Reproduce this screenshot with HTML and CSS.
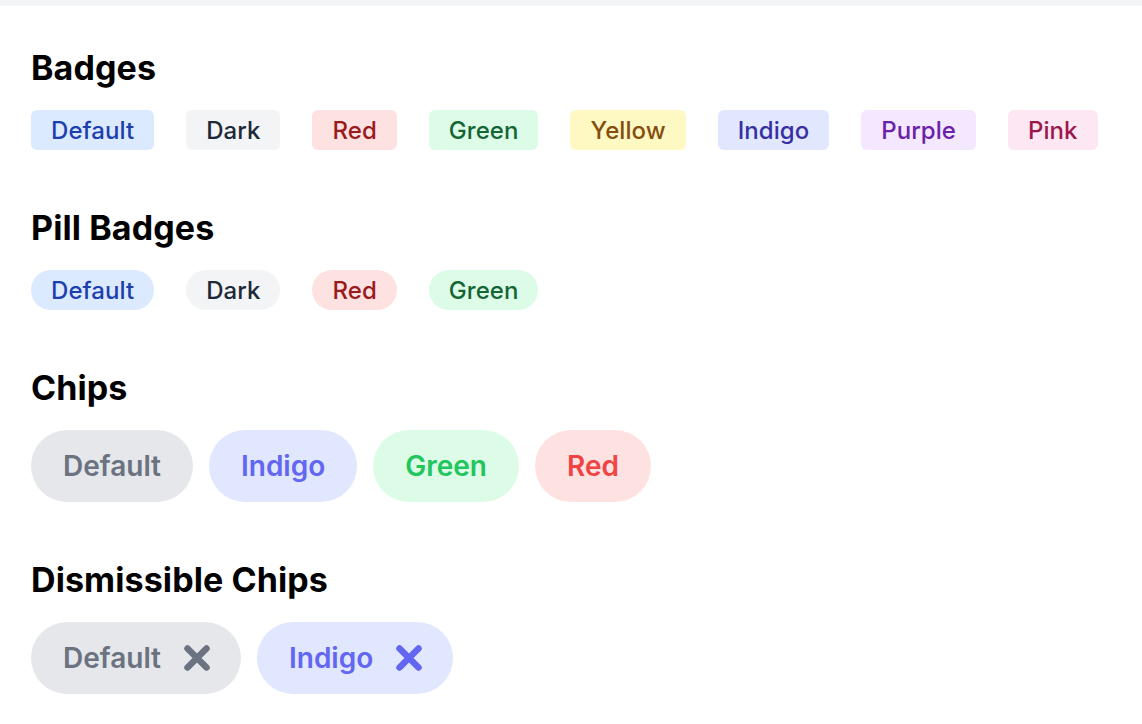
FILE: index.html
```html
<!DOCTYPE html>
<html lang="en">
<head>
  <meta charset="UTF-8">
  <title>Badges and Chips</title>
  <meta name="viewport" content="width=device-width, initial-scale=1">
  <link rel="stylesheet" href="styles.css">
</head>
<body>

<div class="topbar"></div>

<main class="page">
  <section class="block">
    <h2>Badges</h2>
    <div class="row">
      <span class="badge blue">Default</span>
      <span class="badge dark">Dark</span>
      <span class="badge red">Red</span>
      <span class="badge green">Green</span>
      <span class="badge yellow">Yellow</span>
      <span class="badge indigo">Indigo</span>
      <span class="badge purple">Purple</span>
      <span class="badge pink">Pink</span>
    </div>
  </section>

  <section class="block">
    <h2>Pill Badges</h2>
    <div class="row">
      <span class="badge pill blue">Default</span>
      <span class="badge pill dark">Dark</span>
      <span class="badge pill red">Red</span>
      <span class="badge pill green">Green</span>
    </div>
  </section>

  <section class="block">
    <h2>Chips</h2>
    <div class="row tight">
      <span class="chip chip-gray">Default</span>
      <span class="chip chip-indigo">Indigo</span>
      <span class="chip chip-green">Green</span>
      <span class="chip chip-red">Red</span>
    </div>
  </section>

  <section class="block">
    <h2>Dismissible Chips</h2>
    <div class="row tight">
      <span class="chip chip-gray dismiss">
        Default
        <button class="close" type="button" aria-label="Remove">
          <svg width="26" height="26" viewBox="0 0 26 26"><path d="M3.5 3.5L22.5 22.5M22.5 3.5L3.5 22.5"/></svg>
        </button>
      </span>
      <span class="chip chip-indigo dismiss">
        Indigo
        <button class="close" type="button" aria-label="Remove">
          <svg width="26" height="26" viewBox="0 0 26 26"><path d="M3.5 3.5L22.5 22.5M22.5 3.5L3.5 22.5"/></svg>
        </button>
      </span>
    </div>
  </section>
</main>

</body>
</html>
```

FILE: styles.css
```css
body {
  margin: 0;
  font-family: Inter, "Noto Sans", sans-serif;
  background: white;
  color: #000;
}

.topbar {
  height: 6px;
  background: #f3f4f6;
}

.page {
  padding: 42px 31px 0;
}

.block {
  margin-bottom: 58px;
}

.block h2 {
  font-size: 34px;
  line-height: 40px;
  font-weight: 700;
  letter-spacing: 0.1px;
  margin: 0 0 22px;
}

.row {
  display: flex;
  gap: 32px;
  align-items: center;
}

.row.tight {
  gap: 16px;
}

.badge {
  font-size: 24px;
  line-height: 32px;
  font-weight: 500;
  letter-spacing: 0.06px;
  padding: 5px 20px 3px;
  border-radius: 6px;
}

.badge.pill {
  border-radius: 9999px;
}

.blue   { background: #dbeafe; color: #1e40af; }
.dark   { background: #f3f4f6; color: #1f2937; }
.red    { background: #fee2e2; color: #991b1b; }
.green  { background: #dcfce7; color: #166534; }
.yellow { background: #fef9c3; color: #854d0e; }
.indigo { background: #e0e7ff; color: #3730a3; }
.purple { background: #f3e8ff; color: #6b21a8; }
.pink   { background: #fce7f3; color: #9d174d; }

.chip {
  display: inline-flex;
  align-items: center;
  font-size: 28px;
  line-height: 40px;
  font-weight: 600;
  padding: 16px 32px;
  border-radius: 9999px;
}

.chip-gray   { background: #e5e7eb; color: #6b7280; }
.chip-indigo { background: #e0e7ff; color: #6366f1; }
.chip-green  { background: #dcfce7; color: #22c55e; }
.chip-red    { background: #fee2e2; color: #ef4444; }

.chip.dismiss {
  padding-right: 31px;
}

.close {
  display: flex;
  margin-left: 23px;
  padding: 0;
  border: none;
  background: none;
  color: inherit;
  cursor: pointer;
}

.close path {
  stroke: currentColor;
  stroke-width: 6.5;
  stroke-linecap: round;
  fill: none;
}
```
